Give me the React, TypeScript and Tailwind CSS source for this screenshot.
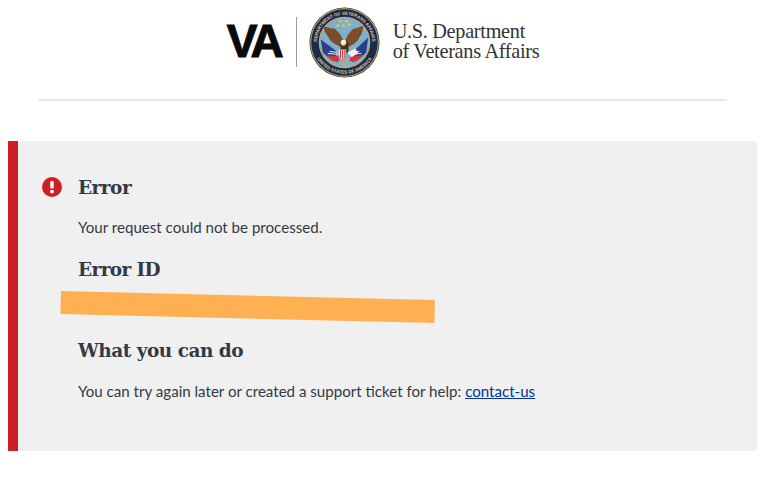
import React from 'react';

const serif = "font-['Liberation_Serif',serif]";
const headingFont = "font-['DejaVu_Serif',serif]";

const Seal: React.FC = () => (
    <svg width="71" height="71" viewBox="0 0 72 72" className="shrink-0">
        <defs>
            <path id="ring-top" d="M 10.6 47.8 A 28 28 0 1 1 61.4 47.8" />
            <path id="ring-bottom" d="M 5 46 A 33 33 0 0 0 67 46" />
        </defs>
        <circle cx="36" cy="36" r="35.5" fill="#1c2a52" />
        <circle cx="36" cy="36" r="34.3" fill="none" stroke="#b59a52" strokeWidth="1.2" />
        <circle cx="36" cy="36" r="25.5" fill="#7db0cf" stroke="#c9ac5c" strokeWidth="1.2" />
        <text fontSize="4.6" fontWeight="700" fill="#d9c98c" fontFamily="Liberation Sans, sans-serif">
            <textPath href="#ring-top" startOffset="50%" textAnchor="middle">DEPARTMENT OF VETERANS AFFAIRS</textPath>
        </text>
        <text fontSize="4.6" fontWeight="700" fill="#d9c98c" fontFamily="Liberation Sans, sans-serif">
            <textPath href="#ring-bottom" startOffset="50%" textAnchor="middle">UNITED STATES OF AMERICA</textPath>
        </text>
        {/* stars */}
        <g fill="#e8c94a">
            <circle cx="32" cy="14.5" r="1.4" />
            <circle cx="38" cy="14.5" r="1.4" />
            <circle cx="29" cy="19" r="1.4" />
            <circle cx="35" cy="19" r="1.4" />
            <circle cx="41" cy="18" r="1.4" />
        </g>
        {/* flags */}
        <path d="M12 33 L27 44 L29 56 Q20 53 14 46 Z" fill="#2c3f86" />
        <path d="M60 31 L46 44 L44 56 Q52 53 58 46 Z" fill="#2c3f86" />
        <path d="M17 49 L30 50 L31 55 L24 55 Z" fill="#d0383f" />
        <path d="M55 49 L42 50 L41 55 L48 55 Z" fill="#d0383f" />
        <path d="M21 45 L28 46 M19 47 L29 48 M44 46 L51 45 M43 48 L53 47" stroke="#f1eee8" strokeWidth="1" />
        {/* eagle */}
        <path d="M33 41 C27 38 22 36 20 31 C17 27 15 24 15 20 C18 20 21 21 23 22 C25 21 27 22 28 24 C31 26 33 30 35 34 Z" fill="#7d4c28" />
        <path d="M39 41 C45 38 49 36 51 31 C54 27 55 23 55 19 C52 20 49 21 47 22 C45 21 44 23 43 24 C40 27 38 30 37 34 Z" fill="#7d4c28" />
        <path d="M32 37 C33 33 39 33 40 37 L40 45 C38 48 34 48 32 45 Z" fill="#4a2c18" />
        <circle cx="35" cy="36" r="2.8" fill="#f4f1ea" />
        <path d="M36 37 L33 40 L37 39 Z" fill="#d9a63a" />
        <path d="M30 43 L38 43 L37 51 L34 54 L31 51 Z" fill="#f2f0ea" />
        <path d="M32 43 V52 M34.2 43 V54 M36.4 43 V52" stroke="#c9363c" strokeWidth="1.2" />
        <path d="M39 46 L47 42 L50 47 L43 51 Z" fill="#f2f0ea" />
        <path d="M33 53 L36 59 L39 53" stroke="#d9a63a" strokeWidth="1.6" fill="none" />
    </svg>
);

const AlertIcon: React.FC = () => (
    <svg width="20" height="20" viewBox="0 0 20 20" className="shrink-0">
        <circle cx="10" cy="10" r="10" fill="#cd2026" />
        <rect x="8.3" y="4" width="3.4" height="7.6" rx="1" fill="#fff" />
        <rect x="8.3" y="13" width="3.4" height="3.2" rx="0.8" fill="#fff" />
    </svg>
);

const App: React.FC = () => {
    return (
        <div className="w-[771px] h-[479px] bg-white overflow-hidden font-['Lato',sans-serif] text-[#323a45]">
            {/* Header logo */}
            <header className="ml-[38px] mr-[44px] h-[101px] border-b-2 border-[#e9e9e9] flex justify-center pt-[7px]">
                <div className="flex items-start h-[71px] ml-[1px]">
                    <span className="w-[56px] font-['Liberation_Sans',sans-serif] font-bold text-[46px] leading-[54px] tracking-[-3.5px] text-[#0a0a0a] mt-[7px] [-webkit-text-stroke:1px_#0a0a0a] whitespace-nowrap">VA</span>
                    <div className="w-px h-[50px] bg-[#9b9b9b] ml-[13px] mr-[12px] mt-[10px]" />
                    <Seal />
                    <div className={`${serif} ml-[13px] mt-[14px] text-[20.3px] leading-[20px] tracking-[-0.3px] text-[#333] whitespace-nowrap`}>
                        <div>U.S. Department</div>
                        <div>of Veterans Affairs</div>
                    </div>
                </div>
            </header>

            {/* Error alert */}
            <main className="relative ml-[8px] mt-[40px] w-[749px] h-[310px] bg-[#f0f0f0] border-l-[10px] border-[#cd2026] pl-[60px] pt-[35px]">
                <div className="absolute left-[24px] top-[36px]">
                    <AlertIcon />
                </div>
                <h1 className={`${headingFont} font-bold text-[18.5px] leading-[24px] tracking-[-0.5px]`}>Error</h1>
                <p className="mt-[15px] text-[15.1px] leading-[24px]">Your request could not be processed.</p>
                <h2 className={`${headingFont} font-bold text-[18.5px] leading-[24px] tracking-[-0.6px] mt-[19px]`}>Error ID</h2>
                <h2 className={`${headingFont} font-bold text-[18.5px] leading-[26px] tracking-[-0.5px] mt-[56px]`}>What you can do</h2>
                <p className="mt-[15px] text-[15.1px] leading-[24px]">
                    You can try again later or created a support ticket for help:{' '}
                    <a href="#" className="text-[#003399] underline">contact-us</a>
                </p>
                {/* redaction mark */}
                <div className="absolute left-[43px] top-[150px] w-[374px] h-[23px] bg-[#ffb053] origin-top-left rotate-[1.38deg]" />
            </main>
        </div>
    );
};

export default App;
